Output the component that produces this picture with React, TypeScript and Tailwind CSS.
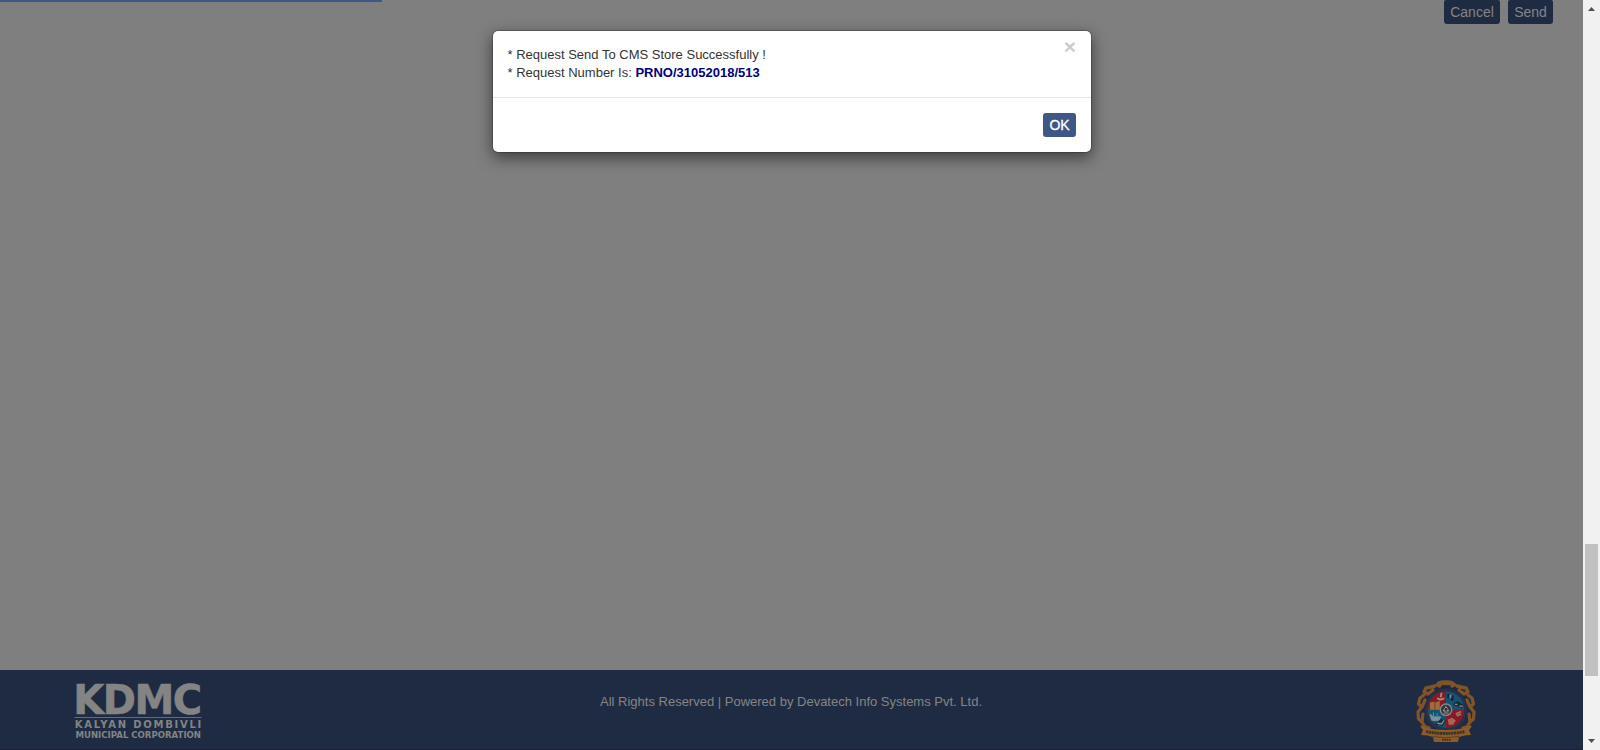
function KdmcLogo() {
  return (
    <svg className="overflow-visible" width="136" height="64" viewBox="0 0 136 64" fontFamily="'DejaVu Sans', sans-serif" fontWeight="700" fill="#848484">
      <text x="3.2" y="35" fontSize="40" textLength="129" lengthAdjust="spacing" stroke="#848484" strokeWidth="0.6">KDMC</text>
      <rect x="4.5" y="38" width="127" height="1" fill="#66697a" />
      <text x="4.8" y="48.8" fontSize="10" textLength="126.5" lengthAdjust="spacing">KALYAN DOMBIVLI</text>
      <text x="5.5" y="59" fontSize="8.5" textLength="125.5" lengthAdjust="spacingAndGlyphs">MUNICIPAL CORPORATION</text>
    </svg>
  );
}

function Emblem() {
  return (
    <svg width="64" height="68" viewBox="0 0 64 68">
      <g fill="none" stroke="#805427" strokeLinecap="round" strokeLinejoin="round">
        <path d="M22 6 Q24 1.5 31.8 2 Q39 1.5 42 6 L38 8 Q31 5 25 8Z" fill="#805427" strokeWidth="1.5" />
        <path d="M21 7 L17 8 L12 9 L10 13 L14 15 L19 11" strokeWidth="3.4" />
        <path d="M43 7 L47 8 L52 9 L54 13 L50 15 L45 11" strokeWidth="3.4" />
        <path d="M10 16 L6 19 L4.5 25 L8 28 L11 21" strokeWidth="3.2" />
        <path d="M54 16 L58 19 L59.5 25 L56 28 L53 21" strokeWidth="3.2" />
        <path d="M7 29 L4 33 L4.5 40 L8 43 L9 35" strokeWidth="3.2" />
        <path d="M57 29 L60 33 L59.5 40 L56 43 L55 35" strokeWidth="3.2" />
        <path d="M8 43 L11 48 L15 49 M56 43 L53 48 L49 49" strokeWidth="3.4" />
      </g>
      <circle cx="32" cy="30.7" r="21" fill="#293147" />
      <g transform="translate(32 30.7) scale(.89) translate(-32 -32)">
        <circle cx="32" cy="32" r="20.5" fill="#125474" />
        <path d="M32 32 V11.5 A20.5 20.5 0 0 0 11.5 32Z" fill="#851b29" />
        <path d="M32 32 H52.5 A20.5 20.5 0 0 1 32 52.5Z" fill="#851b29" />
        <path d="M14 24 L18 23 L20 24 L25 22 V32 H14Z" fill="#a26d37" />
        <path d="M19.5 24 V32" stroke="#6b3e28" />
        <path d="M22 19 Q26 22 30 19 M26 18 L27 13" stroke="#b18a70" strokeWidth="2" fill="none" />
        <path d="M35 14 V19 M39 16 V22" stroke="#182333" strokeWidth="3" />
        <path d="M37 15 V19" stroke="#859199" strokeWidth="2" />
        <path d="M41 27 L45 24 L51 28 M41 25 L51 29" stroke="#20282d" strokeWidth="3" fill="none" />
        <path d="M42 26 H45 M47 28 H51" stroke="#7c8d91" strokeWidth="1.4" />
        <path d="M14 37 L18 40 H26 L24 44 H16Z M18 39 V35 M22 39 V36" fill="#77929c" stroke="#77929c" />
        <path d="M21 49 L28 43 M26 50 L31 44" stroke="#182b37" strokeWidth="3" />
        <path d="M22 47 L27 48 L30 44" stroke="#82939a" strokeWidth="1.4" fill="none" />
        <path d="M34 43 L39 41 L43 44 L40 49 H35Z" fill="#a66557" />
        <path d="M43 37 L49 34 M44 39 L49 37" stroke="#a36c5b" strokeWidth="2" />
      </g>
      <circle cx="32" cy="30.7" r="6.4" fill="#8a8a87" />
      <circle cx="32" cy="30.7" r="5" fill="#303641" />
      <path d="M29.2 32 L32 27.5 L34.7 32Z M29.7 34 H34.7" fill="#9a9a94" stroke="#9a9a94" />
      <circle cx="32" cy="30.5" r="1.4" fill="#222b38" />
      <path d="M27.5 7.5 H36.5" stroke="#19263a" strokeWidth="2.4" />
      <path d="M6 47 Q10 46 12 49 Q32 53 51 49 Q54 46 58 47 L55 51 L57 56 Q50 56 45 58 L44 63 H20 L19 58 Q14 56 7 56 L9 51Z" fill="#8b5c25" />
      <path d="M12 52.5 Q32 56.5 51 52.5" fill="none" stroke="#3c302b" strokeWidth="2.8" strokeDasharray="2.2 .6" />
      <path d="M19 57.5 Q32 60 45 57.5" fill="none" stroke="#513b28" strokeWidth="0.8" />
      <path d="M28 60.8 H37" stroke="#3c302b" strokeWidth="2" strokeDasharray="1.6 .7" />
    </svg>
  );
}

export default function App() {
  return (
    <div className="relative flex h-[750px] w-[1600px] overflow-hidden bg-[#7f7f7f] font-['Liberation_Sans',Arial,sans-serif]">
      <div className="flex w-[1583px] flex-col">
        <main className="flex h-[670px] flex-col">
          <div className="h-[2px] w-[382px] shrink-0 bg-[#3e5785]" />
          <div className="-mt-[2px] flex justify-end gap-2 pr-[30px] text-[14px] leading-6 text-[#858585]">
            <button className="h-6 w-14 rounded-b-[3px] rounded-t-[2px] bg-[#1f2b43]">Cancel</button>
            <button className="h-6 w-[45px] rounded-b-[3px] rounded-t-[2px] bg-[#1f2b43]">Send</button>
          </div>
        </main>
        <footer className="flex h-20 justify-between bg-[#1f2b43] pl-[70px] pr-[105px] pt-[9px] shadow-[inset_0_-1px_0_#1d2039]">
          <div className="w-[136px]"><KdmcLogo /></div>
          <p className="ml-[-38px] mt-[14px] whitespace-nowrap text-[13px] leading-[18px] text-[#858585]">
            All Rights Reserved | Powered by Devatech Info Systems Pvt. Ltd.
          </p>
          <div className="w-16"><Emblem /></div>
        </footer>
      </div>
      <aside className="flex w-[17px] flex-col items-center justify-between bg-[#f1f1f1]">
        <svg width="17" height="17" viewBox="0 0 17 17"><path d="M5 11 L8.5 7 L12 11Z" fill="#505050" /></svg>
        <div className="mt-[527px] h-[132px] w-[13px] bg-[#c1c1c1]" />
        <svg className="mt-auto" width="17" height="17" viewBox="0 0 17 17"><path d="M5 6 H12 L8.5 10Z" fill="#505050" /></svg>
      </aside>
      <section role="dialog" className="absolute left-[492px] top-[30px] w-[600px] rounded-[6px] border border-black/20 bg-white bg-clip-padding shadow-[0_5px_15px_rgba(0,0,0,0.5)]">
        <div className="flex h-[66px] justify-between px-[15px] pt-[15px] text-[13px] leading-[18px] text-[#333]">
          <div className="-ml-[0.5px]">
            <p>* Request Send To CMS Store Successfully !</p>
            <p>* Request Number Is: <b className="text-[#000080]">PRNO/31052018/513</b></p>
          </div>
          <button className="-mt-[9px] h-5 text-[21px] font-bold leading-5 text-[#ccc]">×</button>
        </div>
        <div className="flex h-[55px] justify-end border-t border-[#e5e5e5] p-[15px]">
          <button className="h-6 w-[33px] rounded-[3px] bg-[#3e5785] text-[14px] leading-6 text-white [-webkit-text-stroke:0.3px_white]">OK</button>
        </div>
      </section>
    </div>
  );
}
